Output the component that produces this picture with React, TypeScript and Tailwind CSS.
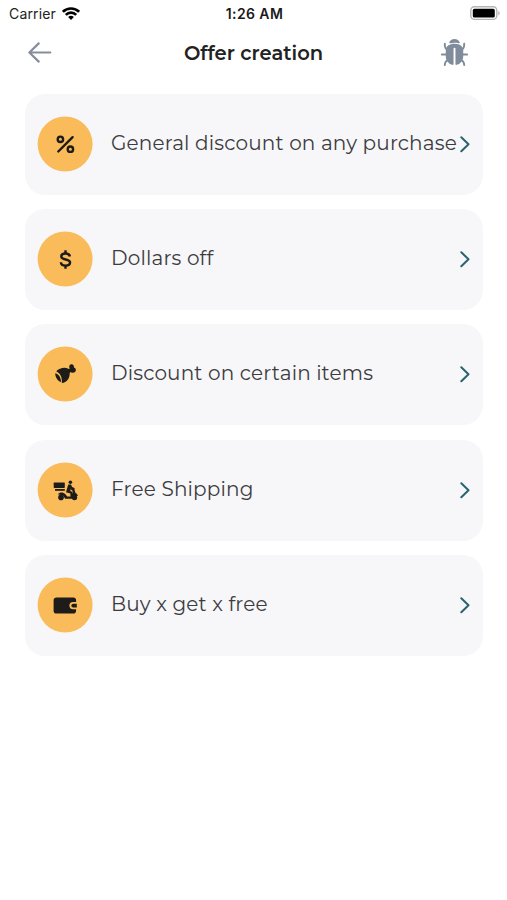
import type { ReactNode } from "react";
import { IoBug } from "react-icons/io5";

interface Offer {
    title: string;
    icon: ReactNode;
}

const offers: Offer[] = [
    {
        title: "General discount on any purchase",
        icon: (
            <g fill="none" stroke="#1d1c1a" strokeWidth="2.4" strokeLinecap="round">
                <circle cx="22.4" cy="22.3" r="2.7" />
                <circle cx="32.4" cy="32.2" r="2.7" />
                <path d="M34.6 20.2 20.3 34.5" />
            </g>
        ),
    },
    {
        title: "Dollars off",
        icon: (
            <g fill="none" stroke="#1d1c1a" strokeWidth="2.4">
                <path d="M27.5 18.2v3.3M27.5 33.4v3.3" />
                <path d="M31.9 24.5c-.3-2-2-3-4.4-3-2.5 0-4.2 1-4.2 2.9 0 4.3 8.8 1.8 8.8 6.2 0 1.9-1.9 3-4.5 3s-4.6-1.3-4.7-3.4" />
            </g>
        ),
    },
    {
        title: "Discount on certain items",
        icon: (
            <g fill="#1d1c1a">
                <path d="M18.2 24.3c3-3.3 8.5-4.4 11.6-2.8l1.1.4.8-.5c-1.1-1.9-.3-4 1.5-4.1 1.9-.2 3.1 1.4 2.7 3.2 1.9.4 2.6 2.6 1.5 4.1-1.1 1.5-3.4 1.5-4.7.3l-1 1c.3 4.9-2.7 9.5-7.9 10 .6-4.8-1.2-9.6-5.6-11.6Z" />
                <path d="M17.3 26.2c3.8 1 5.9 5 5.7 8.9-3.6-1.4-5.9-5.1-5.7-8.9Z" />
            </g>
        ),
    },
    {
        title: "Free Shipping",
        icon: (
            <g fill="#1d1c1a">
                <rect x="15.7" y="19.6" width="11.1" height="5.3" rx=".7" />
                <path d="M17 26h9.8v1.8H17z" />
                <circle cx="32.4" cy="19.3" r="1.8" />
                <path d="M30.2 21.6h2.8l1.1 2.5 2.4.9v1.6l-3.6-.9-.7 2.2 2.4 1.1v4.4h-2.2v-3l-4.4-1.2z" />
                <path d="M19.8 31.3c1.8-2.3 5.4-2.5 7.4-.2l2 2.3h3.4l1.3-2.8 1.1-.7-.8-2.7-1.1-.3v-1.5h3l1.4 4.5c1.4.7 2.3 1.8 2.3 3.2h-3.4l-2.5 2.6h-6.7L25 32.4z" />
                <circle cx="23" cy="34.4" r="2.8" />
                <circle cx="36.5" cy="34.6" r="2.7" />
            </g>
        ),
    },
    {
        title: "Buy x get x free",
        icon: (
            <path
                fill="#1d1c1a"
                d="M18.6 19.6h16.7c1.7 0 2.8 1.1 2.8 2.6V24H35a3.6 3.6 0 0 0 0 7.2h3.1V33c0 1.5-1.1 2.6-2.8 2.6H18.6c-1.8 0-3-1.1-3-2.7V22.3c0-1.6 1.2-2.7 3-2.7ZM35.2 25.7h3.6v3.7h-3.6a1.85 1.85 0 0 1 0-3.7Z"
            />
        ),
    },
];

function StatusBar() {
    return (
        <div className="grid h-[27px] grid-cols-3 items-center pl-[9px] pr-[7px] font-['Inter',sans-serif] text-black">
            <div className="flex items-center gap-[6px]">
                <span className="text-[14px] leading-[17px] tracking-[0.15px] text-[#222]">Carrier</span>
                <svg width="18" height="13" viewBox="0 0 18 13" fill="none" stroke="#000" strokeWidth="2.6">
                    <path d="M.9 4.8c4.5-4.5 11.7-4.5 16.2 0" />
                    <path d="M3.8 7.8c2.9-2.9 7.5-2.9 10.4 0" />
                    <path d="M9 13 6.1 10.1a4.1 4.1 0 0 1 5.8 0Z" fill="#000" stroke="none" />
                </svg>
            </div>
            <span className="text-center text-[14px] font-semibold leading-[17px] tracking-[0.4px] text-[#1a1a1a]">1:26 AM</span>
            <svg className="justify-self-end" width="30" height="15" viewBox="0 0 30 15">
                <rect x=".8" y=".8" width="26" height="12.6" rx="3.6" fill="#fff" stroke="#b5b5b5" strokeWidth="1.4" />
                <rect x="2.8" y="2.8" width="22" height="8.8" rx="1.6" fill="#000" />
                <path d="M28.4 5v4.4c1.6-.6 1.6-3.8 0-4.4Z" fill="#a8a8a8" />
            </svg>
        </div>
    );
}

function Header() {
    return (
        <header className="flex h-[51px] items-center justify-between pl-[28px] pr-[37px]">
            <svg width="24" height="22" viewBox="0 0 24 22" fill="none" stroke="#868d9b" strokeWidth="2.2" strokeLinecap="round" strokeLinejoin="round">
                <path d="M22.3 10.5H1.6M10.7 1.4 1.4 10.5l9.3 9.1" />
            </svg>
            <h1 className="pl-[16px] text-[19.5px] font-semibold leading-6 text-[#222]">Offer creation</h1>
            <IoBug size={31} color="#808c9b" />
        </header>
    );
}

function OfferCard({ title, icon }: Offer) {
    return (
        <button className="flex h-[101px] w-full items-center rounded-[20px] bg-[#f7f7fa] pl-[12.5px] pr-[13px] text-left">
            <svg className="shrink-0 overflow-visible" width="55" height="55" viewBox="0 0 55 55">
                <circle cx="27.1" cy="27" r="27.5" fill="#fabc5a" />
                {icon}
            </svg>
            <span className="ml-[18.5px] w-0 grow whitespace-nowrap pb-[3px] text-[20px] leading-6 tracking-[0.16px] text-[#3c3c40]">
                {title}
            </span>
            <svg className="shrink-0" width="10" height="17" viewBox="0 0 10 17" fill="none" stroke="#27646e" strokeWidth="2" strokeLinecap="round" strokeLinejoin="round">
                <path d="M1.3 1.3 8.5 8.2l-7.2 7" />
            </svg>
        </button>
    );
}

export default function App() {
    return (
        <div className="min-h-[900px] w-[507px] overflow-hidden bg-white font-['Montserrat','Inter',sans-serif]">
            <StatusBar />
            <Header />
            <main className="flex flex-col gap-[14.4px] pl-[25px] pr-[24px] pt-[15.6px]">
                {offers.map((offer) => (
                    <OfferCard key={offer.title} {...offer} />
                ))}
            </main>
        </div>
    );
}
